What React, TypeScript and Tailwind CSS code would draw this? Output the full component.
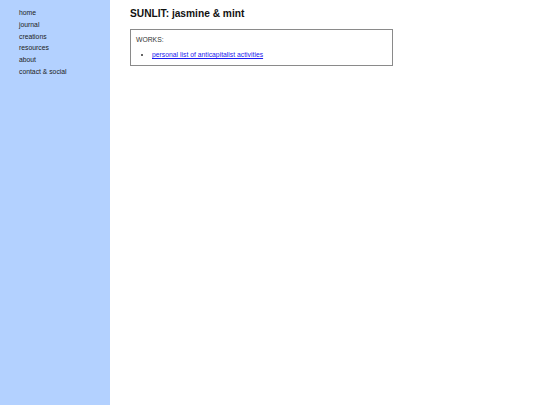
export default function App() {
  const links = ["home", "journal", "creations", "resources", "about", "contact & social"];
  return (
    <div className="flex min-h-[405px] w-[540px] bg-white text-black" style={{ fontFamily: '"Liberation Sans", Arial, sans-serif' }}>
      {/* Sidebar */}
      <nav className="w-[110px] shrink-0 bg-[#b3d1ff] pl-[19px] pt-[7px]">
        <ul className="flex flex-col">
          {links.map((l) => (
            <li key={l} className="text-[6.8px] leading-[11.8px] text-[#222]">
              {l}
            </li>
          ))}
        </ul>
      </nav>

      {/* Main */}
      <main className="flex-1 pl-[20px] pt-[7px]">
        <h1 className="text-[10.2px] font-bold leading-[14px] text-[#111]">SUNLIT: jasmine &amp; mint</h1>
        <div className="mt-[8px] w-[263px] border border-[#8a8a8a] px-[5px] pb-[5px] pt-[5px] text-[6.8px]">
          <p className="leading-[10px] text-[#333]">WORKS:</p>
          <ul className="mt-[5px] list-disc pl-[16px] text-[#333]">
            <li className="leading-[10px]">
              <a href="#" className="text-[#1a1aee] underline">personal list of anticapitalist activities</a>
            </li>
          </ul>
        </div>
      </main>
    </div>
  );
}
